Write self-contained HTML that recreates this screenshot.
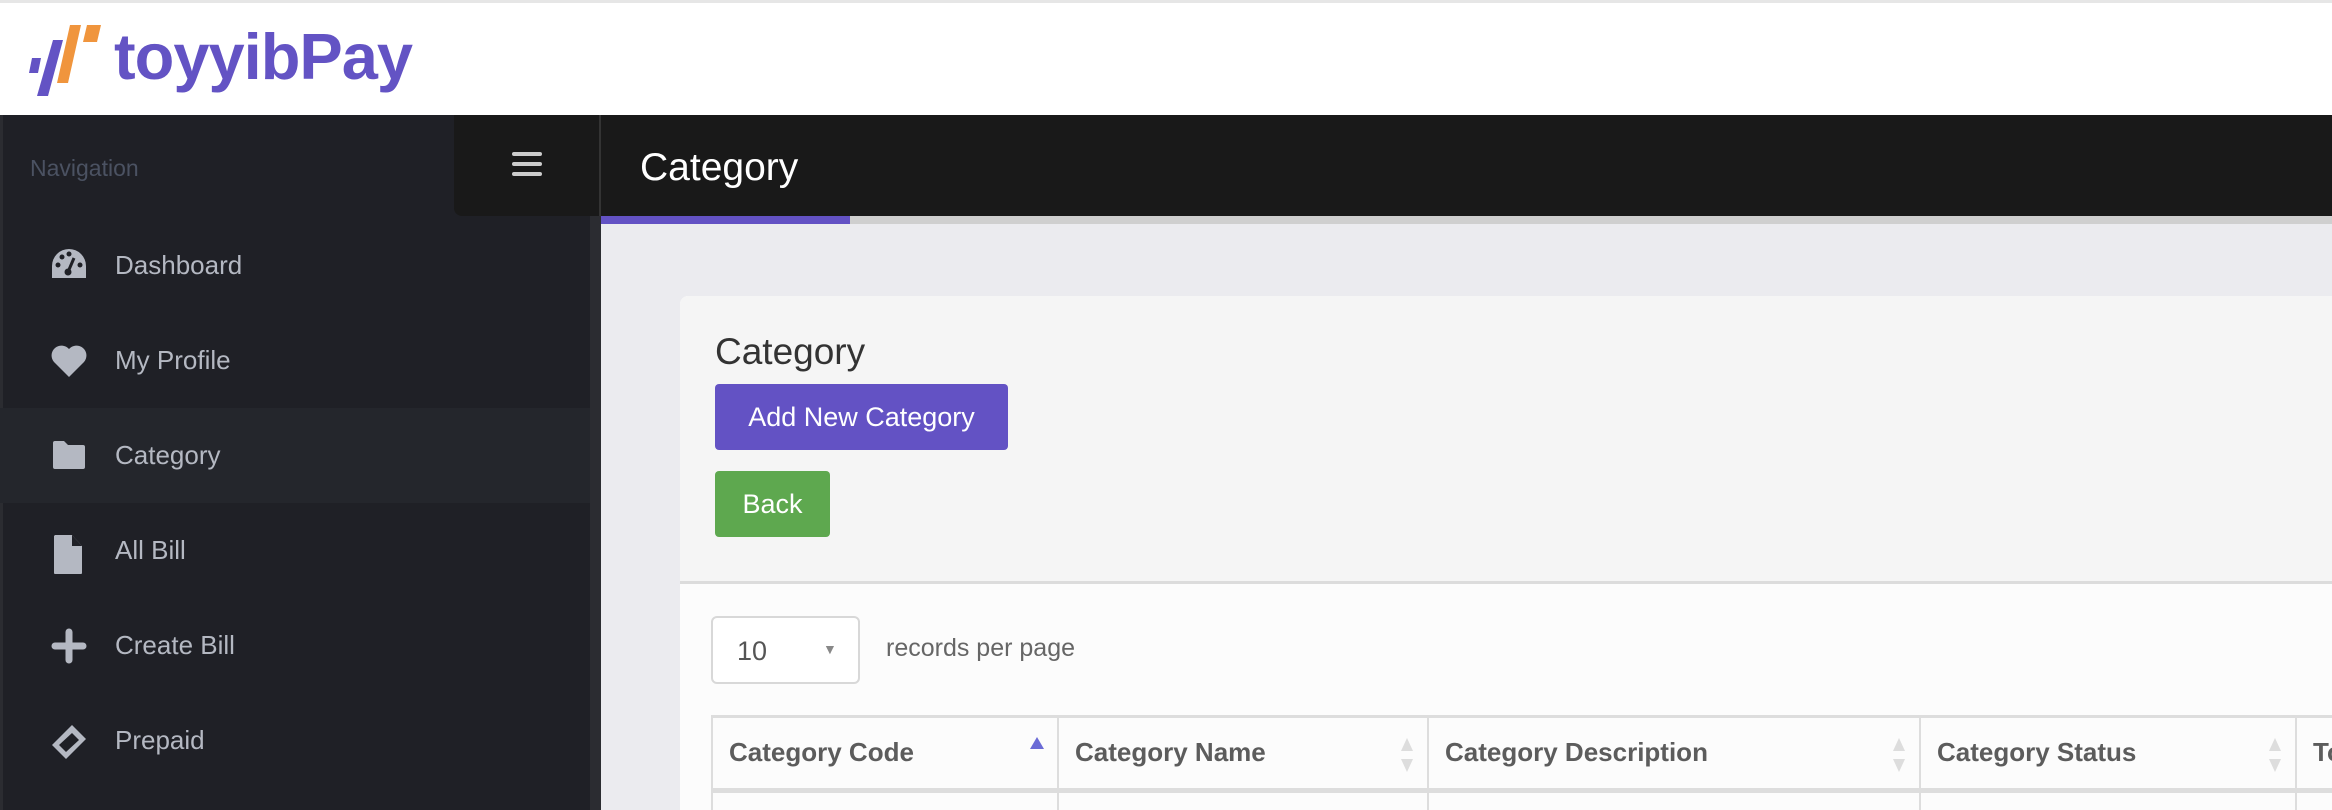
<!DOCTYPE html>
<html style="overflow:hidden;height:810px"><head><meta charset="utf-8"><style>
*{margin:0;padding:0;box-sizing:border-box}
body{width:2332px;height:810px;overflow:hidden;background:#ebebef;font-family:"Liberation Sans",sans-serif;position:relative}
.hdr{position:absolute;left:0;top:0;width:2332px;height:115px;background:#fff;border-top:3px solid #e6e6e6}
.logo{position:absolute;left:114px;top:16px;font-size:65px;font-weight:bold;color:#6353c4;letter-spacing:-1px}
.side{position:absolute;left:0;top:115px;width:590px;height:695px;background:#1f2026;border-left:3px solid #2b2c31}
.stripe{position:absolute;left:590px;top:115px;width:11px;height:695px;background:#2b2c31}
.nav{position:absolute;left:30px;top:155px;font-size:23px;color:#4b5262}
.item{position:absolute;left:0;width:590px;height:95px;color:#b4b8c2;font-size:26px}
.item span{position:absolute;left:115px;top:32px}
.item svg{position:absolute;left:50px;top:29px}
.topbar{position:absolute;left:601px;top:115px;width:1731px;height:101px;background:#191919}
.tog{position:absolute;left:454px;top:115px;width:147px;height:101px;background:#191919;border-radius:0 0 0 8px;border-right:2px solid #333}
.title{position:absolute;left:640px;top:146px;font-size:39px;color:#fff}
.uline{position:absolute;left:601px;top:216px;width:249px;height:8px;background:#6352c4}
.uline2{position:absolute;left:850px;top:216px;width:1482px;height:8px;background:#cfcfcf}
.card{position:absolute;left:680px;top:296px;width:1652px;height:514px;background:#fcfcfc;border-radius:8px 0 0 0;overflow:hidden}
.ctop{position:absolute;left:0;top:0;width:100%;height:288px;background:#f5f5f5;border-bottom:3px solid #dcdcdc;border-radius:8px 0 0 0}
.h{position:absolute;left:35px;top:35px;font-size:37px;color:#333}
.btn{position:absolute;color:#fff;font-size:27px;border-radius:4px;text-align:center}
.sel{position:absolute;left:31px;top:320px;width:149px;height:68px;border:2px solid #d8d8d8;border-radius:6px;background:#fff;font-size:27px;color:#555}
.tbl{position:absolute;left:31px;top:419px;height:95px;width:1621px;border-top:3px solid #ddd;overflow:hidden}
.col{position:absolute;top:0;height:95px;border-left:2px solid #ddd;font-size:26px;font-weight:bold;color:#5c5c5c}
.col span{position:absolute;left:16px;top:19px}
.hline{position:absolute;left:0;top:70px;width:100%;height:5px;background:#ddd}
</style></head><body>
<div class="hdr">
<svg style="position:absolute;left:0;top:-3px" width="110" height="100" viewBox="0 0 110 100">
<polygon points="70,25 81,25 68,83 57,83" fill="#f0953d"/>
<polygon points="87,25 101,25 97,42 83,42" fill="#f0953d"/>
<polygon points="53,40 63,40 48,96 37,96" fill="#6353c4"/>
<polygon points="32,58 41,58 38,73 29,73" fill="#6353c4"/>
</svg>
<div class="logo">toyyibPay</div>
</div>
<div class="side"></div>
<div class="stripe"></div>
<div class="nav">Navigation</div>
<div class="item" style="top:218px"><svg width="38" height="34" viewBox="0 0 38 34"><path d="M19 2A17 17 0 0 0 2 19v12h34V19A17 17 0 0 0 19 2z" fill="#b4b8c2"/><circle cx="8" cy="18" r="2.5" fill="#1f2026"/><circle cx="12" cy="10" r="2.5" fill="#1f2026"/><circle cx="19" cy="7" r="2.5" fill="#1f2026"/><circle cx="30" cy="18" r="2.5" fill="#1f2026"/><circle cx="18" cy="25" r="3.5" fill="#1f2026"/><path d="M18 25L24 11" stroke="#1f2026" stroke-width="3"/></svg><span>Dashboard</span></div>
<div class="item" style="top:313px"><svg width="38" height="36" viewBox="0 0 38 36"><path d="M19 35L4 20A9 9 0 0 1 19 7A9 9 0 0 1 34 20z" fill="#b4b8c2"/></svg><span>My Profile</span></div>
<div class="item" style="top:408px;background:#24262c"><svg width="38" height="34" viewBox="0 0 38 34"><path d="M3 6q0-2 2-2h9l4 4h15q2 0 2 2v20q0 2-2 2H5q-2 0-2-2z" fill="#b4b8c2"/></svg><span>Category</span></div>
<div class="item" style="top:503px"><svg width="38" height="44" viewBox="0 0 38 44"><path d="M5 3h17l10 11v27q0 1-1 1H5q-1 0-1-1V4z" fill="#b4b8c2"/><path d="M22 3v11h10" fill="#1f2026"/></svg><span>All Bill</span></div>
<div class="item" style="top:598px"><svg width="38" height="38" viewBox="0 0 38 38"><path d="M19 5v28M5 19h28" stroke="#b4b8c2" stroke-width="7" stroke-linecap="round"/></svg><span>Create Bill</span></div>
<div class="item" style="top:693px;height:95px"><svg width="38" height="40" viewBox="0 0 38 40"><path d="M22 3l14 14-20 20L2 23z" fill="#b4b8c2"/><path d="M22 11l7 7-13 12-7-7z" fill="#1f2026"/></svg><span>Prepaid</span></div>
<div class="topbar"></div>
<div class="tog"><svg style="position:absolute;left:58px;top:37px" width="30" height="25" viewBox="0 0 30 25"><rect y="0" width="30" height="4" rx="2" fill="#ccc"/><rect y="10" width="30" height="4" rx="2" fill="#ccc"/><rect y="20" width="30" height="4" rx="2" fill="#ccc"/></svg></div>
<div class="title">Category</div>
<div class="uline2"></div><div class="uline"></div>
<div class="card">
<div class="ctop"></div>
<div class="h">Category</div>
<div class="btn" style="left:35px;top:88px;width:293px;height:66px;background:#6352c4;line-height:66px">Add New Category</div>
<div class="btn" style="left:35px;top:175px;width:115px;height:66px;background:#5ea84f;line-height:66px">Back</div>
<div class="sel"><span style="position:absolute;left:24px;top:18px">10</span><span style="position:absolute;left:110px;top:23px;font-size:14px;color:#888">▼</span></div>
<div style="position:absolute;left:206px;top:338px;font-size:25px;color:#666">records per page</div>
<div class="tbl">
<div class="col" style="left:0;width:346px"><span>Category Code</span><svg style="position:absolute;left:317px;top:19px" width="14" height="12"><path d="M7 0L14 12H0z" fill="#6b6bd6"/></svg></div>
<div class="col" style="left:346px;width:370px"><span>Category Name</span><svg style="position:absolute;left:342px;top:20px" width="12" height="34"><path d="M6 0L12 13H0z M6 34L12 21H0z" fill="#ddd"/></svg></div>
<div class="col" style="left:716px;width:492px"><span>Category Description</span><svg style="position:absolute;left:464px;top:20px" width="12" height="34"><path d="M6 0L12 13H0z M6 34L12 21H0z" fill="#ddd"/></svg></div>
<div class="col" style="left:1208px;width:376px"><span>Category Status</span><svg style="position:absolute;left:348px;top:20px" width="12" height="34"><path d="M6 0L12 13H0z M6 34L12 21H0z" fill="#ddd"/></svg></div>
<div class="col" style="left:1584px;width:37px"><span>To</span></div>
<div class="hline"></div>
</div>
</div>
</body></html>
